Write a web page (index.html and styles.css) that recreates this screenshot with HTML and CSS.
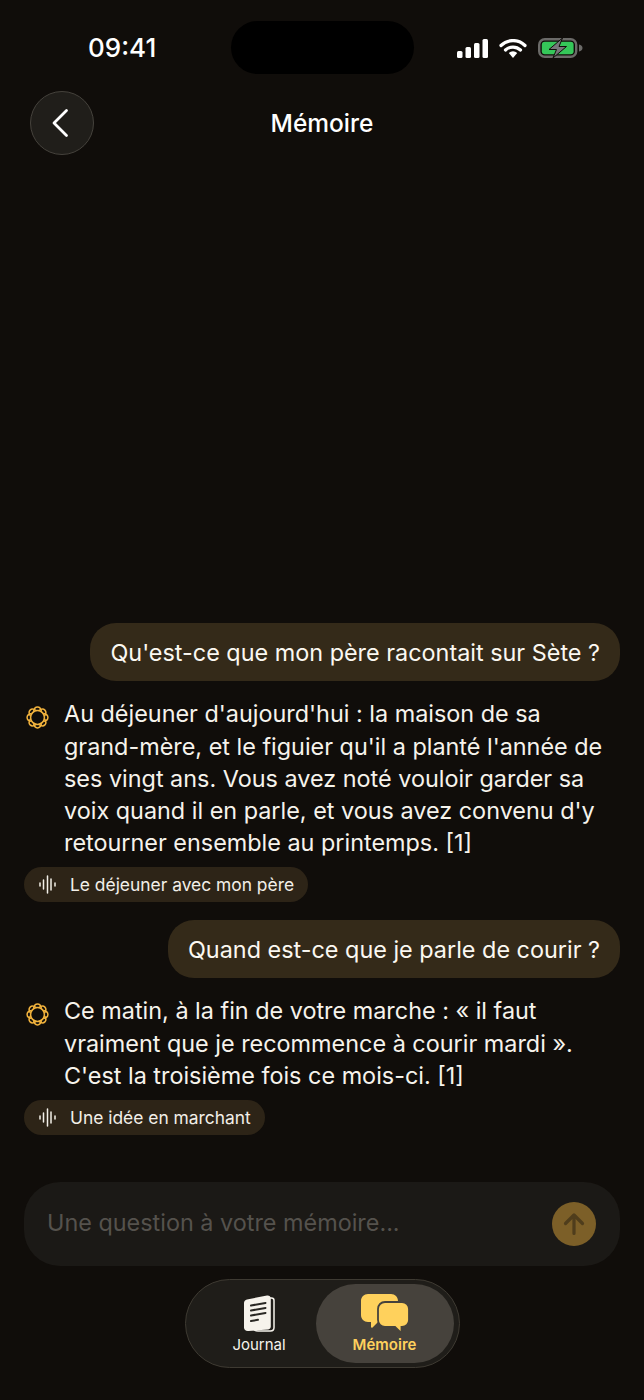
FILE: index.html
```html
<!DOCTYPE html>
<html lang="fr">
	<head>
		<meta charset="UTF-8">
		<title>Mémoire</title>
		<link rel="stylesheet" href="styles.css">
	</head>
	<body>
		<div class="screen">
			<div class="status">
				<span class="time">09:41</span>
				<span class="island"></span>
				<span class="status-icons">
					<svg width="31" height="19" viewBox="0 0 31 19"><rect x="0" y="12" width="5.500" height="7" rx="1.500" fill="#fff"/><rect x="8.500" y="8" width="5.500" height="11" rx="1.500" fill="#fff"/><rect x="17" y="4" width="5.500" height="15" rx="1.500" fill="#fff"/><rect x="25.500" y="0" width="5.500" height="19" rx="1.500" fill="#fff"/></svg>
					<svg width="28" height="19" viewBox="0 0 28 19"><path d="M2 6.500a17 17 0 0 1 24 0M6.500 11a11 11 0 0 1 15 0" fill="none" stroke="#fff" stroke-width="3.200" stroke-linecap="round"/><path d="M9.800 14a6 6 0 0 1 8.400 0L14 19z" fill="#fff"/></svg>
					<svg width="45" height="20" viewBox="0 0 45 20"><rect x="1.200" y="1.200" width="37" height="17.600" rx="5.500" fill="none" stroke="#6b6a68" stroke-width="2.400"/><rect x="3.800" y="3.800" width="31.800" height="12.400" rx="3" fill="#35c759"/><path d="M41 6.500c2.200.5 3.500 1.700 3.500 3.500s-1.300 3-3.500 3.500z" fill="#6b6a68"/><path d="M24.500 0 11 11.500h7.500L15 20 28.500 8.500H21z" fill="#77767a" stroke="#100d0a" stroke-width="1"/></svg>
				</span>
			</div>
			<div class="nav">
				<button class="back">
					<svg width="20" height="30" viewBox="0 0 20 30"><path d="M16.500 2.500 4 15l12.500 12.500" fill="none" stroke="#fff" stroke-width="2.800" stroke-linecap="round" stroke-linejoin="round"/></svg>
				</button>
				<h1>Mémoire</h1>
			</div>
			<div class="messages">
				<div class="bubble">Qu'est-ce que mon père racontait sur Sète ?</div>
				<div class="answer">
					<svg class="spark" width="27" height="27" viewBox="0 0 27 27">
						<g id="rosette" fill="none" stroke="#f2b33d" stroke-width="1.500">
							<circle cx="13.500" cy="13.500" r="6.900"/>
							<path id="lobe" d="M9.500 7.800C10.500 1.500 16.500 1.500 17.500 7.800"/>
							<use href="#lobe" transform="rotate(45 13.500 13.500)"/>
							<use href="#lobe" transform="rotate(90 13.500 13.500)"/>
							<use href="#lobe" transform="rotate(135 13.500 13.500)"/>
							<use href="#lobe" transform="rotate(180 13.500 13.500)"/>
							<use href="#lobe" transform="rotate(225 13.500 13.500)"/>
							<use href="#lobe" transform="rotate(270 13.500 13.500)"/>
							<use href="#lobe" transform="rotate(315 13.500 13.500)"/>
						</g>
					</svg>
					<p>Au déjeuner d'aujourd'hui : la maison de sa grand-mère, et le figuier qu'il a planté l'année de ses vingt ans. Vous avez noté vouloir garder sa voix quand il en parle, et vous avez convenu d'y retourner ensemble au printemps. [1]</p>
				</div>
				<div class="chip">
					<svg width="17" height="19" viewBox="0 0 17 19"><path d="M1 8v3M4.500 5v9M8.500 1v17M12 4v11M16 8v3" fill="none" stroke="#f2efe8" stroke-width="1.500" stroke-linecap="round"/></svg>
					Le déjeuner avec mon père
				</div>
				<div class="bubble second">Quand est-ce que je parle de courir ?</div>
				<div class="answer">
					<svg class="spark" width="27" height="27" viewBox="0 0 27 27"><use href="#rosette"/></svg>
					<p>Ce matin, à la fin de votre marche : « il faut vraiment que je recommence à courir mardi ». C'est la troisième fois ce mois-ci. [1]</p>
				</div>
				<div class="chip">
					<svg width="17" height="19" viewBox="0 0 17 19"><path d="M1 8v3M4.500 5v9M8.500 1v17M12 4v11M16 8v3" fill="none" stroke="#f2efe8" stroke-width="1.500" stroke-linecap="round"/></svg>
					Une idée en marchant
				</div>
			</div>
			<div class="composer">
				<span class="hint">Une question à votre mémoire...</span>
				<button class="send">
					<svg width="24" height="24" viewBox="0 0 24 24"><path d="M12 21.500V3M3.500 11.500 12 3l8.500 8.500" fill="none" stroke="#4f3d1c" stroke-width="3.200" stroke-linecap="round" stroke-linejoin="round"/></svg>
				</button>
			</div>
			<div class="tabs-wrap">
				<div class="tabs">
					<div class="tab">
						<svg width="32" height="39" viewBox="0 0 32 39"><path d="M27 4h1.500c1.500 0 2.500 1 2.500 2.500v27c0 2-1.500 3.500-3.500 3.500H15c-1.500 0-3-.5-4-1.500" fill="none" stroke="#f6f3ec" stroke-width="1.500"/><path d="M4 5.500 24 1.500c2-.4 3.800 1 3.800 3v28c0 1.500-1 2.700-2.500 3L5.500 37c-2.500.4-4.500-1.200-4.500-3.500V9c0-1.700 1.200-3.200 3-3.500z" fill="#f6f3ec"/><path d="M8 11.500 22.500 9M8 16.500 22.500 14M8 21.500 22.500 19M8 27l7-1.200" fill="none" stroke="#2a2824" stroke-width="2" stroke-linecap="round"/></svg>
						<span>Journal</span>
					</div>
					<div class="tab active">
						<svg width="50" height="39" viewBox="0 0 50 39"><path d="M8 0h23c4 0 7 3 7 7v14c0 4-3 7-7 7H18l-5.500 5.500c-.5.5-1.500.2-1.500-.5v-5H8c-4 0-7-3-7-7V7c0-4 3-7 7-7z" fill="#ffd15c"/><path d="M25 8h17c4 0 7 3 7 7v11c0 4-3 7-7 7h-.5v4c0 .8-1 1.200-1.600.6L35 33H25c-4 0-7-3-7-7V15c0-4 3-7 7-7z" fill="#ffd15c" stroke="#46423c" stroke-width="1.800"/></svg>
						<span>Mémoire</span>
					</div>
				</div>
			</div>
		</div>
	</body>
</html>
```

FILE: styles.css
```css
*{
	margin:0;
	padding:0;
	box-sizing:border-box;
}
body{
	background:#100d0a;
	font-family:"Inter","Liberation Sans",sans-serif;
	color:#f6f3ec;
}
button{
	border:none;
	font-family:inherit;
}
.screen{
	width:644px;
	height:1400px;
	display:flex;
	flex-direction:column;
	overflow:hidden;
}
.status{
	height:91px;
	padding-top:21px;
	display:grid;
	grid-template-columns:231px 183px 230px;
	align-items:start;
}
.time{
	margin:10px 0 0 88px;
	font-size:26px;
	line-height:34px;
	font-weight:500;
	color:#fff;
}
.island{
	height:53px;
	border-radius:27px;
	background:#000;
}
.status-icons{
	display:flex;
	align-items:center;
	gap:11px;
	margin:17px 0 0 43px;
}
.nav{
	height:64px;
	padding-left:30px;
	position:relative;
	display:flex;
	align-items:center;
}
.back{
	width:64px;
	height:64px;
	border-radius:50%;
	background:#201e1a;
	border:1px solid #45423c;
	display:flex;
	align-items:center;
	justify-content:center;
	padding-right:5px;
}
.nav h1{
	position:absolute;
	left:0;
	right:0;
	top:16px;
	text-align:center;
	font-size:24.500px;
	line-height:33px;
	font-weight:500;
	color:#fff;
}
.messages{
	flex:1;
	display:flex;
	flex-direction:column;
	justify-content:flex-end;
	align-items:flex-start;
	padding:0 24px;
}
.bubble{
	align-self:flex-end;
	height:58px;
	padding:0 20px;
	display:flex;
	align-items:center;
	border-radius:26px;
	background:#342a19;
	font-size:23.400px;
	color:#fbf8f1;
	white-space:nowrap;
}
.second{
	margin-top:18px;
}
.answer{
	display:flex;
	gap:13px;
	margin-top:17px;
}
.spark{
	flex:none;
	margin-top:6px;
}
.answer p{
	width:550px;
	font-size:23.400px;
	line-height:32.200px;
}
.chip{
	height:35px;
	margin-top:8px;
	padding:0 14px 0 15px;
	display:flex;
	align-items:center;
	gap:14px;
	border-radius:18px;
	background:#2d2417;
	font-size:17.400px;
	color:#f2efe8;
	white-space:nowrap;
}
.composer{
	height:84px;
	margin:47px 24px 13px;
	padding:0 24px 0 23px;
	display:flex;
	align-items:center;
	justify-content:space-between;
	border-radius:36px;
	background:#1b1916;
	font-size:23.400px;
	color:#55524d;
}
.hint{
	margin-bottom:3px;
}
.send{
	width:44px;
	height:44px;
	border-radius:50%;
	background:#7c5f28;
	display:flex;
	align-items:center;
	justify-content:center;
}
.tabs-wrap{
	display:flex;
	justify-content:center;
	padding-bottom:32px;
}
.tabs{
	width:275px;
	height:89px;
	padding:4px 5px 4px 17px;
	display:flex;
	justify-content:space-between;
	border-radius:45px;
	background:#1f1d19;
	border:1px solid #3e3a32;
}
.tab{
	width:113px;
	display:flex;
	flex-direction:column;
	align-items:center;
	justify-content:flex-end;
	gap:3px;
	padding-bottom:9px;
	font-size:15px;
	line-height:18px;
}
.active{
	width:138px;
	border-radius:40px;
	background:#46423c;
	color:#ffd15c;
	font-weight:600;
}
```
